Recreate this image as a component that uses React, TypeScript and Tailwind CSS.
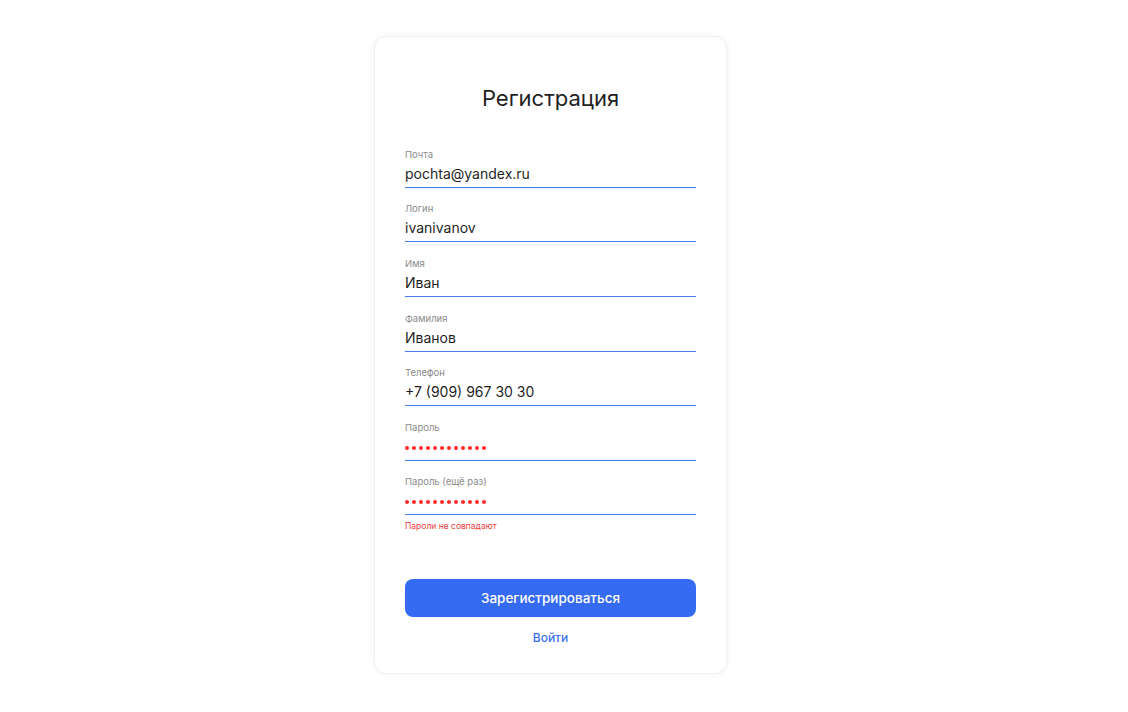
import React from "react";

const fields = [
  { label: "Почта", value: "pochta@yandex.ru", mt: 0 },
  { label: "Логин", value: "ivanivanov", mt: 15 },
  { label: "Имя", value: "Иван", mt: 16 },
  { label: "Фамилия", value: "Иванов", mt: 16 },
  { label: "Телефон", value: "+7 (909) 967 30 30", mt: 15 },
];

const mtClass: Record<number, string> = {
  0: "mt-0",
  15: "mt-[15px]",
  16: "mt-[16px]",
};

function Field({ label, value, password, mt }: { label: string; value: string; password?: boolean; mt: number }) {
  return (
    <div className={"flex flex-col " + mtClass[mt]}>
      <div className="text-[9.5px] leading-[12px] h-[12px] text-[#8a8a8a]">{label}</div>
      {password ? (
        <div className="h-[24px] flex items-center pt-[4px] gap-[2.8px]">
          {Array.from({ length: 12 }).map((_, i) => (
            <span key={i} className="w-[4.2px] h-[4.2px] rounded-full bg-[#ff2b2b]" />
          ))}
        </div>
      ) : (
        <div className="text-[14px] leading-[22px] h-[22px] mt-[2px] text-[#1f1f1f]">{value}</div>
      )}
      <div className="h-px bg-[#4a7cf4] mt-[2px]" />
    </div>
  );
}

export default function App() {
  return (
    <div
      className="w-[1128px] h-[712px] bg-white flex justify-start pl-[374px] pt-[36px]"
      style={{ fontFamily: "Inter, 'Noto Sans', sans-serif" }}
    >
      <div className="w-[353px] h-[638px] rounded-[12px] bg-white border border-[#f0f0f0] shadow-[0_0_6px_rgba(0,0,0,0.06)] px-[30px] pt-[47px] flex flex-col">
        <h1 className="text-center text-[22px] leading-[28px] text-[#1f1f1f] font-normal">Регистрация</h1>
        <div className="flex flex-col mt-[37px]">
          {fields.map((f) => (
            <Field key={f.label} label={f.label} value={f.value} mt={f.mt} />
          ))}
          <Field label="Пароль" value="" password mt={16} />
          <div className="flex flex-col">
            <Field label="Пароль (ещё раз)" value="" password mt={15} />
            <div className="text-[8.5px] leading-[12px] text-[#f03c3c] mt-[5px]">Пароли не совпадают</div>
          </div>
        </div>
        <button className="mt-[47px] h-[38px] rounded-[8px] bg-[#356af2] text-white text-[13.5px] font-medium flex items-center justify-center">
          Зарегистрироваться
        </button>
        <div className="text-center mt-[13px] text-[12px] leading-[16px] font-medium text-[#3c6ff0]">Войти</div>
      </div>
    </div>
  );
}
